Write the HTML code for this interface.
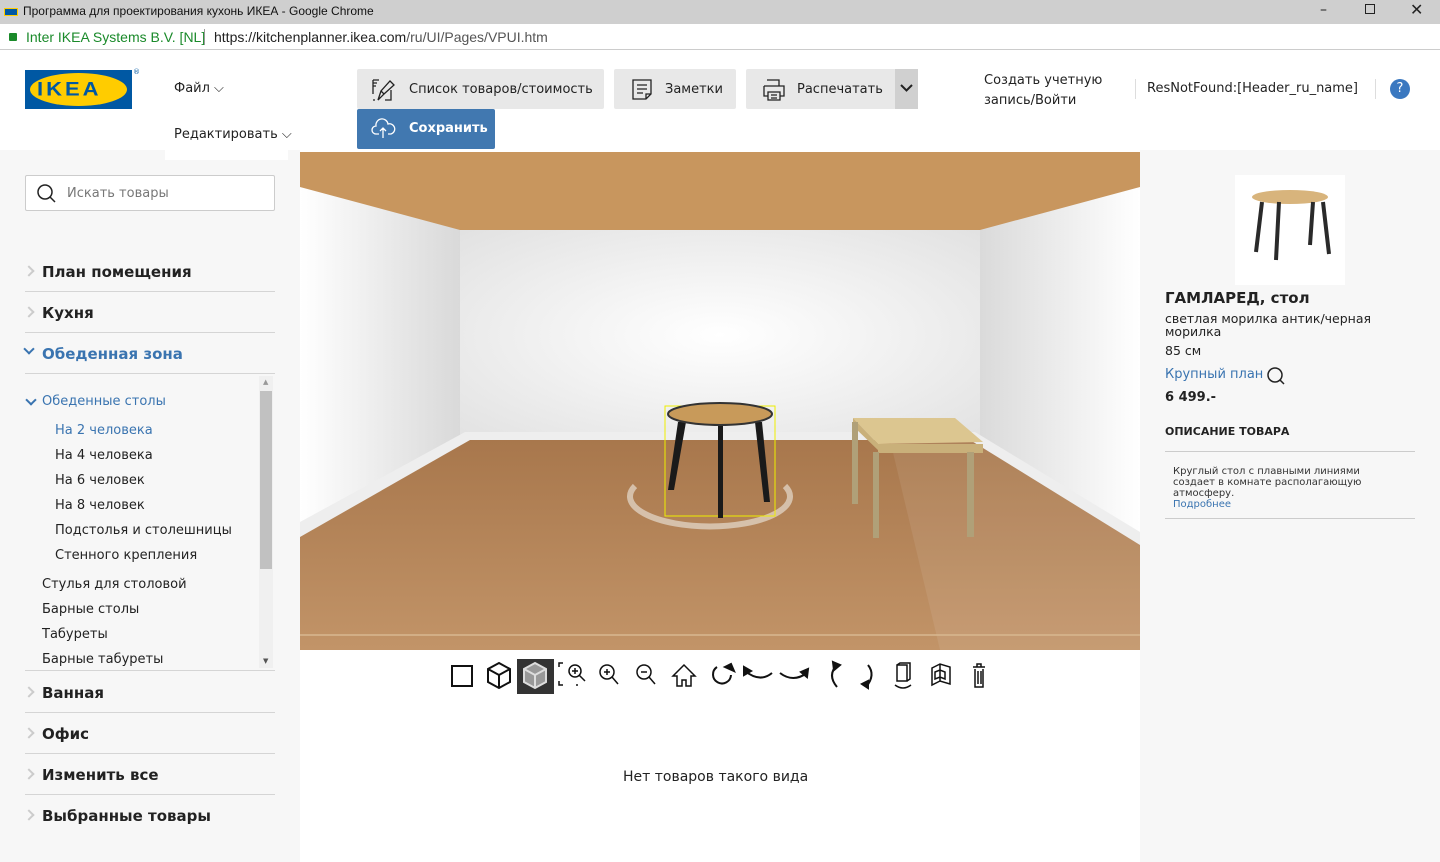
<!DOCTYPE html>
<html><head><meta charset="utf-8"><style>
*{margin:0;padding:0;box-sizing:border-box}
body{width:1440px;height:862px;overflow:hidden;position:relative;background:#fff;font-family:"DejaVu Sans","Liberation Sans",sans-serif;color:#222}
.a{position:absolute;white-space:nowrap}
.btn{position:absolute;background:#e8e8e8;border-radius:2px;font-size:13px;color:#222;display:flex;align-items:center}
.cat{position:absolute;left:25px;width:250px;font-size:15px;font-weight:bold;border-bottom:1px solid #d5d5d5;height:41px}
.cat span{position:absolute;left:17px;top:12px}
.cat i{position:absolute;left:0;top:16px;width:8px;height:8px;border-top:2px solid #ccc;border-right:2px solid #ccc;transform:rotate(45deg)}
.sub{position:absolute;font-size:13px;color:#222}
</style></head><body>
<div class="a" style="left:0;top:0;width:1440px;height:24px;background:#cfcfcf"></div>
<div class="a" style="left:4px;top:8px;width:14px;height:8px;background:#0058a3;border:1px solid #fc0"></div>
<div class="a" style="left:23px;top:4px;font-family:'Liberation Sans',sans-serif;font-size:12px;color:#111">Программа для проектирования кухонь ИКЕА - Google Chrome</div>
<div class="a" style="left:1320px;top:2px;font-size:14px">–</div>
<div class="a" style="left:1365px;top:4px;width:10px;height:10px;border:1px solid #222"></div>
<div class="a" style="left:1410px;top:0px;font-size:16px">✕</div>
<div class="a" style="left:0;top:24px;width:1440px;height:26px;background:#fff;border-bottom:1px solid #ccc"></div>
<div class="a" style="left:9px;top:33px;width:8px;height:8px;background:#1a8a2a;border-radius:1px"></div>
<div class="a" style="left:26px;top:29px;font-family:'Liberation Sans',sans-serif;font-size:14px;color:#1a8a2a">Inter IKEA Systems B.V. [NL]</div>
<div class="a" style="left:204px;top:29px;width:1px;height:16px;background:#999"></div>
<div class="a" style="left:214px;top:29px;font-family:'Liberation Sans',sans-serif;font-size:14px;color:#555"><span style="color:#222">https://kitchenplanner.ikea.com</span>/ru/UI/Pages/VPUI.htm</div>
<div class="a" style="left:25px;top:70px;width:107px;height:39px;background:#0058a3"></div>
<div class="a" style="left:30px;top:73px;width:97px;height:33px;background:#ffcc00;border-radius:50%"></div>
<div class="a" style="left:37px;top:76px;font-family:'Liberation Sans',sans-serif;font-weight:900;font-size:22px;color:#0058a3;letter-spacing:3px;transform:scaleY(0.9)">IKEA</div>
<div class="a" style="left:133px;top:68px;font-size:7px;color:#0058a3">®</div>
<div class="a" style="left:174px;top:81px;font-size:13px">Файл ⌵</div>
<div class="a" style="left:174px;top:127px;font-size:13px">Редактировать ⌵</div>
<div class="btn" style="left:357px;top:69px;width:247px;height:40px;padding-left:52px">Список товаров/стоимость</div>
<svg class="a" style="left:371px;top:78px" width="26" height="24" fill="none" stroke="#222" stroke-width="1.3"><path d="M2 2h6M2 5h4M2 8h3M2 2v14M7 22l3-9 9-10 4 4-10 9z M10 13l3 3M2 22h2M20 12v10h-6"/></svg>
<div class="btn" style="left:614px;top:69px;width:122px;height:40px;padding-left:51px">Заметки</div>
<svg class="a" style="left:631px;top:78px" width="24" height="24" fill="none" stroke="#222" stroke-width="1.3"><path d="M2 2h18v14l-5 5H2z M15 21v-5h5 M6 7h10M6 11h10M6 15h6"/></svg>
<div class="btn" style="left:746px;top:69px;width:150px;height:40px;padding-left:51px">Распечатать</div>
<svg class="a" style="left:761px;top:78px" width="26" height="24" fill="none" stroke="#222" stroke-width="1.3"><path d="M6 2h12v6M3 8h20v10h-4M3 8v10h4M7 14h12v8H7z M10 17h6M10 20h6"/></svg>
<div class="a" style="left:895px;top:69px;width:23px;height:40px;background:#d0d0d0"></div>
<svg class="a" style="left:899px;top:82px" width="15" height="12" fill="none" stroke="#222" stroke-width="2"><path d="M2 3l5.5 5.5L13 3"/></svg>
<div class="a" style="left:357px;top:109px;width:138px;height:40px;background:#4178b0;border-radius:2px;color:#fff;font-size:13px;font-weight:bold;padding:12px 0 0 52px">Сохранить</div>
<svg class="a" style="left:371px;top:117px" width="26" height="22" fill="none" stroke="#fff" stroke-width="1.3"><path d="M8 17H5a4 4 0 0 1 0-8 6 6 0 0 1 12-2 4.5 4.5 0 0 1 3 10h-3 M12 21V11 M9 14l3-3 3 3"/></svg>
<div class="a" style="left:984px;top:71px;font-size:13px;line-height:20px">Создать учетную<br>запись/Войти</div>
<div class="a" style="left:1135px;top:79px;width:1px;height:20px;background:#ddd"></div>
<div class="a" style="left:1147px;top:81px;font-size:13px">ResNotFound:[Header_ru_name]</div>
<div class="a" style="left:1375px;top:79px;width:1px;height:20px;background:#ddd"></div>
<div class="a" style="left:1390px;top:79px;width:20px;height:20px;border-radius:50%;background:#3a78c0;color:#fff;font-size:13px;text-align:center;line-height:20px">?</div>
<div class="a" style="left:0;top:150px;width:300px;height:712px;background:#f7f7f7"></div>
<div class="a" style="left:165px;top:150px;width:123px;height:10px;background:#fff"></div>
<div class="a" style="left:25px;top:175px;width:250px;height:36px;background:#fff;border:1px solid #ccc;border-radius:2px"></div>
<svg class="a" style="left:36px;top:183px" width="22" height="22" fill="none" stroke="#222" stroke-width="1.5"><circle cx="9" cy="9" r="7"/><path d="M14 14l5 5"/></svg>
<div class="a" style="left:67px;top:186px;font-size:13px;color:#777">Искать товары</div>
<div class="cat" style="top:251px"><i></i><span>План помещения</span></div>
<div class="cat" style="top:292px"><i></i><span>Кухня</span></div>
<div class="cat" style="top:333px;color:#3a74b0"><i style="border-color:#3a74b0;transform:rotate(135deg);top:12px"></i><span>Обеденная зона</span></div>
<div class="a" style="left:25px;top:670px;width:250px;height:1px;background:#d5d5d5"></div>
<div class="a" style="left:259px;top:376px;width:14px;height:292px;background:#f0f0f0"></div>
<div class="a" style="left:260px;top:391px;width:12px;height:178px;background:#c1c1c1"></div>
<div class="a" style="left:263px;top:378px;font-size:7px;color:#999">▲</div>
<div class="a" style="left:263px;top:657px;font-size:7px;color:#555">▼</div>
<div class="a" style="left:27px;top:396px;width:8px;height:8px;border-top:2px solid #3a74b0;border-right:2px solid #3a74b0;transform:rotate(135deg)"></div>
<div class="sub" style="left:42px;top:394px;color:#3a74b0">Обеденные столы</div>
<div class="sub" style="left:55px;top:423px;color:#3a74b0">На 2 человека</div>
<div class="sub" style="left:55px;top:448px">На 4 человека</div>
<div class="sub" style="left:55px;top:473px">На 6 человек</div>
<div class="sub" style="left:55px;top:498px">На 8 человек</div>
<div class="sub" style="left:55px;top:523px">Подстолья и столешницы</div>
<div class="sub" style="left:55px;top:548px">Стенного крепления</div>
<div class="sub" style="left:42px;top:577px">Стулья для столовой</div>
<div class="sub" style="left:42px;top:602px">Барные столы</div>
<div class="sub" style="left:42px;top:627px">Табуреты</div>
<div class="sub" style="left:42px;top:652px">Барные табуреты</div>
<div class="cat" style="top:672px"><i></i><span>Ванная</span></div>
<div class="cat" style="top:713px"><i></i><span>Офис</span></div>
<div class="cat" style="top:754px"><i></i><span>Изменить все</span></div>
<div class="cat" style="top:795px;border:none"><i></i><span>Выбранные товары</span></div>
<svg class="a" style="left:300px;top:152px" width="840" height="498">
<defs>
<linearGradient id="fl" x1="0" y1="0" x2="0" y2="1"><stop offset="0" stop-color="#a8774c"/><stop offset="1" stop-color="#c29468"/></linearGradient>
<linearGradient id="lw" x1="0" y1="0" x2="1" y2="0"><stop offset="0" stop-color="#fff"/><stop offset="1" stop-color="#d9d9d9"/></linearGradient>
<linearGradient id="rw" x1="1" y1="0" x2="0" y2="0"><stop offset="0" stop-color="#fff"/><stop offset="1" stop-color="#dadada"/></linearGradient>
<radialGradient id="bw" cx=".5" cy=".5" r=".7"><stop offset="0" stop-color="#fff"/><stop offset="1" stop-color="#e2e2e2"/></radialGradient>
</defs>
<rect width="840" height="498" fill="#c8965e"/>
<polygon points="0,35 160,78 160,288 0,380" fill="url(#lw)"/>
<polygon points="840,35 680,78 680,288 840,390" fill="url(#rw)"/>
<rect x="160" y="78" width="520" height="210" fill="url(#bw)"/>
<polygon points="0,380 165,288 675,288 840,390 840,498 0,498" fill="url(#fl)"/>
<polygon points="590,288 675,288 840,390 840,498 640,498" fill="#fff" opacity=".08"/>
<polygon points="0,370 165,280 170,288 0,385" fill="#eee"/>
<polygon points="840,380 675,280 670,288 840,393" fill="#eee"/>
<rect x="165" y="280" width="510" height="8" fill="#eee"/>
<line x1="0" y1="483" x2="840" y2="483" stroke="#d8b890" stroke-width="1.5"/>
<path d="M335 334a80 30 0 1 0 150 0" fill="none" stroke="#e6dccf" stroke-width="6" opacity=".7"/>
<rect x="365" y="254" width="110" height="110" fill="none" stroke="#ee0" stroke-width="1"/>
<polygon points="378,270 368,338 374,338 386,270" fill="#1a1a1a"/>
<polygon points="455,270 464,350 470,350 462,270" fill="#1a1a1a"/>
<rect x="418" y="272" width="5" height="94" fill="#1a1a1a"/>
<ellipse cx="420" cy="262" rx="52" ry="11" fill="#c89a5a" stroke="#333" stroke-width="2"/>
<polygon points="553,266 655,266 683,290 578,292" fill="#dcc690"/>
<polygon points="553,266 578,292 580,300 553,274" fill="#c9b07a"/>
<rect x="578" y="292" width="105" height="9" fill="#c9b07a"/>
<rect x="552" y="270" width="6" height="82" fill="#b0a078"/>
<rect x="573" y="300" width="6" height="86" fill="#b0a078"/>
<rect x="667" y="300" width="7" height="85" fill="#b0a078"/>
</svg>
<div class="a" style="left:517px;top:659px;width:37px;height:35px;background:#333"></div>
<svg class="a" style="left:440px;top:655px" width="560" height="44" fill="none" stroke="#111" stroke-width="2">
<rect x="12" y="11" width="20" height="20"/>
<path d="M59 8l11 6v13l-11 6-11-6V14z M48 14l11 6 11-6 M59 20v13"/>
<path d="M95 8l11 6v13l-11 6-11-6V14z" fill="#999" stroke="#ddd"/><path d="M84 14l11 6 11-6M95 20v13" stroke="#ddd"/>
<path d="M119 12v-4h4M119 26v4h4M138 30h-2" stroke-width="1.5"/><circle cx="135" cy="16" r="6" stroke-width="1.5"/><path d="M139 20l6 6M132 16h6M135 13v6" stroke-width="1.5"/>
<circle cx="167" cy="17" r="7" stroke-width="1.5"/><path d="M172 22l6 7M164 17h6M167 14v6" stroke-width="1.5"/>
<circle cx="204" cy="17" r="7" stroke-width="1.5"/><path d="M209 22l6 7M201 17h6" stroke-width="1.5"/>
<path d="M244 10l-11 11h4v10h5v-6h4v6h5V21h4z" stroke-width="1.5"/>
<path d="M277 12a9 9 0 1 0 14 8" stroke-width="2"/><path d="M285 12l6-3 3 7z" fill="#111"/>
<path d="M305 16q15 12 27 2" /><path d="M304 12l0 8 7-4z" fill="#111"/>
<path d="M340 18q13 10 27 0"/><path d="M368 14l-1 8-6-5z" fill="#111"/>
<path d="M397 10q-10 10 0 22"/><path d="M393 7l7 3-6 5z" fill="#111"/>
<path d="M428 10q8 10-2 22"/><path d="M422 29l6 4 0-7z" fill="#111"/>
<path d="M457 10h10v16h-10z M457 10l3-2h10v16l-3 2 M455 30q8 6 16 0" stroke-width="1.5"/>
<path d="M492 13l8-4 10 3v17l-10-3-8 4z M500 9v17 M495 17l5-2 5 2v7l-5-2-5 2z" stroke-width="1.5"/>
<path d="M533 12h12M537 12v-3h4v3 M535 14v18h8V14 M538 16v13M541 16v13" stroke-width="1.5"/>
</svg>
<div class="a" style="left:623px;top:769px;font-size:14px">Нет товаров такого вида</div>
<div class="a" style="left:1140px;top:150px;width:300px;height:712px;background:#f7f7f7"></div>
<div class="a" style="left:1235px;top:175px;width:110px;height:110px;background:#fff"></div>
<svg class="a" style="left:1235px;top:175px" width="110" height="110">
<ellipse cx="55" cy="22" rx="38" ry="7" fill="#d8b47c"/>
<path d="M27 27l-6 50M44 27l-3 58M78 27l-3 43M88 27l6 52" stroke="#2a2a2a" stroke-width="4"/>
</svg>
<div class="a" style="left:1165px;top:289px;font-size:15px;font-weight:bold">ГАМЛАРЕД, стол</div>
<div class="a" style="left:1165px;top:312px;font-size:12.5px;line-height:13px">светлая морилка антик/черная<br>морилка</div>
<div class="a" style="left:1165px;top:343px;font-size:12.5px">85 см</div>
<div class="a" style="left:1165px;top:367px;font-size:13px;color:#3a74b0">Крупный план</div>
<svg class="a" style="left:1267px;top:367px" width="20" height="20" fill="none" stroke="#222" stroke-width="1.5"><circle cx="8" cy="8" r="7"/><path d="M13 13l4 4"/></svg>
<div class="a" style="left:1165px;top:390px;font-size:13px;font-weight:bold">6 499.-</div>
<div class="a" style="left:1165px;top:425px;font-size:11px;font-weight:bold">ОПИСАНИЕ ТОВАРА</div>
<div class="a" style="left:1165px;top:451px;width:250px;height:1px;background:#ccc"></div>
<div class="a" style="left:1173px;top:466px;font-size:10px;line-height:11px;color:#333">Круглый стол с плавными линиями<br>создает в комнате располагающую<br>атмосферу.<br><span style="color:#3a74b0">Подробнее</span></div>
<div class="a" style="left:1165px;top:518px;width:250px;height:1px;background:#ccc"></div>
</body></html>
